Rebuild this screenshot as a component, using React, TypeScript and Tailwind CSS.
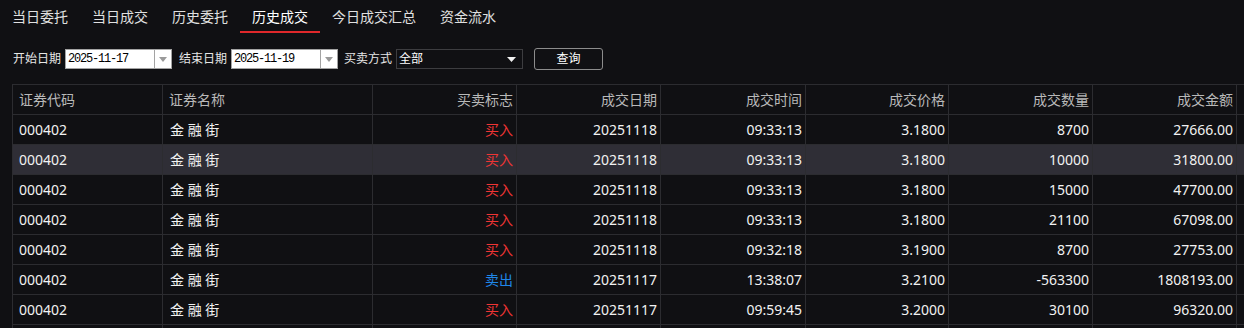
import React from 'react';

type Trade = {
    code: string;
    name: string;
    side: '买入' | '卖出';
    date: string;
    time: string;
    price: string;
    qty: string;
    amount: string;
};

const trades: Trade[] = [
    { code: '000402', name: '金 融 街', side: '买入', date: '20251118', time: '09:33:13', price: '3.1800', qty: '8700', amount: '27666.00' },
    { code: '000402', name: '金 融 街', side: '买入', date: '20251118', time: '09:33:13', price: '3.1800', qty: '10000', amount: '31800.00' },
    { code: '000402', name: '金 融 街', side: '买入', date: '20251118', time: '09:33:13', price: '3.1800', qty: '15000', amount: '47700.00' },
    { code: '000402', name: '金 融 街', side: '买入', date: '20251118', time: '09:33:13', price: '3.1800', qty: '21100', amount: '67098.00' },
    { code: '000402', name: '金 融 街', side: '买入', date: '20251118', time: '09:32:18', price: '3.1900', qty: '8700', amount: '27753.00' },
    { code: '000402', name: '金 融 街', side: '卖出', date: '20251117', time: '13:38:07', price: '3.2100', qty: '-563300', amount: '1808193.00' },
    { code: '000402', name: '金 融 街', side: '买入', date: '20251117', time: '09:59:45', price: '3.2000', qty: '30100', amount: '96320.00' },
];

const tabs = ['当日委托', '当日成交', '历史委托', '历史成交', '今日成交汇总', '资金流水'];

const DateBox: React.FC<{ value: string }> = ({ value }) => (
    <div className="flex h-[20px] w-[107px] items-stretch border border-[#a3a3a3] bg-white">
        <div className="flex flex-1 items-center pl-[2px] font-['Liberation_Mono',monospace] text-[12px] tracking-[-1.2px] text-black">
            {value}
        </div>
        <div className="flex w-[17px] items-center justify-center border-l border-[#a3a3a3]">
            <svg width="8" height="5" viewBox="0 0 8 5">
                <path d="M0 0 L8 0 L4 5 Z" fill="#9a9a9a" />
            </svg>
        </div>
    </div>
);

const cell = 'border border-[#2c2c30]';

const App: React.FC = () => {
    const active = 3;

    return (
        <div className="h-[328px] w-[1244px] overflow-hidden bg-[#101013] font-['Noto_Sans','Noto_Sans_CJK_SC',sans-serif] text-[#e6e6e6]">
            {/* tabs */}
            <div className="flex h-[33px]">
                {tabs.map((t, i) => (
                    <div
                        key={t}
                        className={
                            i === active
                                ? 'flex items-center border-b-2 border-[#e0282b] px-3 pt-[2px] text-[14px] text-white'
                                : 'flex items-center border-b-2 border-transparent px-3 pt-[2px] text-[14px] text-[#e0e0e0]'
                        }
                    >
                        {t}
                    </div>
                ))}
            </div>

            {/* filters */}
            <div className="mt-[15px] flex h-[22px] items-center pl-[13px] text-[12px]">
                <span className="mr-[4px]">开始日期</span>
                <DateBox value="2025-11-17" />
                <span className="ml-[7px] mr-[4px]">结束日期</span>
                <DateBox value="2025-11-19" />
                <span className="ml-[6px] mr-[4px]">买卖方式</span>
                <div className="flex h-[20px] w-[127px] items-center justify-between border border-[#3d3d40] pl-[2px] pr-[6px]">
                    <span className="text-white">全部</span>
                    <svg width="9" height="5" viewBox="0 0 9 5">
                        <path d="M0 0 L9 0 L4.5 5 Z" fill="#f2f2f2" />
                    </svg>
                </div>
                <button className="ml-[11px] flex h-[22px] w-[69px] items-center justify-center rounded-[3px] border border-[#8c8c8c] text-[12px] text-white">
                    查询
                </button>
            </div>

            {/* table */}
            <div className="mt-[14px] pl-[12px]">
                <table className="w-[1284px] table-fixed border-collapse text-[14px]">
                    <colgroup>
                        <col className="w-[150px]" />
                        <col className="w-[210px]" />
                        <col className="w-[144px]" />
                        <col className="w-[144px]" />
                        <col className="w-[145px]" />
                        <col className="w-[143px]" />
                        <col className="w-[144px]" />
                        <col className="w-[144px]" />
                        <col className="w-[60px]" />
                    </colgroup>
                    <thead>
                        <tr className="h-[30px] text-[#b9b9b9]">
                            <th className={`${cell} pl-[6px] text-left font-normal`}>证券代码</th>
                            <th className={`${cell} pl-[6px] text-left font-normal`}>证券名称</th>
                            <th className={`${cell} pr-[3px] text-right font-normal`}>买卖标志</th>
                            <th className={`${cell} pr-[3px] text-right font-normal`}>成交日期</th>
                            <th className={`${cell} pr-[3px] text-right font-normal`}>成交时间</th>
                            <th className={`${cell} pr-[3px] text-right font-normal`}>成交价格</th>
                            <th className={`${cell} pr-[3px] text-right font-normal`}>成交数量</th>
                            <th className={`${cell} pr-[3px] text-right font-normal`}>成交金额</th>
                            <th className={cell}></th>
                        </tr>
                    </thead>
                    <tbody>
                        {trades.map((r, i) => (
                            <tr key={i} className={i === 1 ? 'h-[30px] bg-[#2f2e36]' : 'h-[30px]'}>
                                <td className={`${cell} pl-[6px] text-[#f2f2f2]`}>{r.code}</td>
                                <td className={`${cell} pl-[7px] text-[#f2f2f2]`}>{r.name}</td>
                                <td
                                    className={
                                        r.side === '买入'
                                            ? 'border border-[#2c2c30] pr-[3px] text-right text-[#f03535]'
                                            : 'border border-[#2c2c30] pr-[3px] text-right text-[#1f86e8]'
                                    }
                                >
                                    {r.side}
                                </td>
                                <td className={`${cell} pr-[3px] text-right text-[#f2f2f2]`}>{r.date}</td>
                                <td className={`${cell} pr-[3px] text-right text-[#f2f2f2]`}>{r.time}</td>
                                <td className={`${cell} pr-[3px] text-right text-[#f2f2f2]`}>{r.price}</td>
                                <td className={`${cell} pr-[3px] text-right text-[#f2f2f2]`}>{r.qty}</td>
                                <td className={`${cell} pr-[3px] text-right text-[#f2f2f2]`}>{r.amount}</td>
                                <td className={cell}></td>
                            </tr>
                        ))}
                        {/* next row, only its top edge shows */}
                        <tr className="h-[30px]">
                            {Array.from({ length: 9 }).map((_, k) => (
                                <td key={k} className={cell}></td>
                            ))}
                        </tr>
                    </tbody>
                </table>
            </div>
        </div>
    );
};

export default App;
